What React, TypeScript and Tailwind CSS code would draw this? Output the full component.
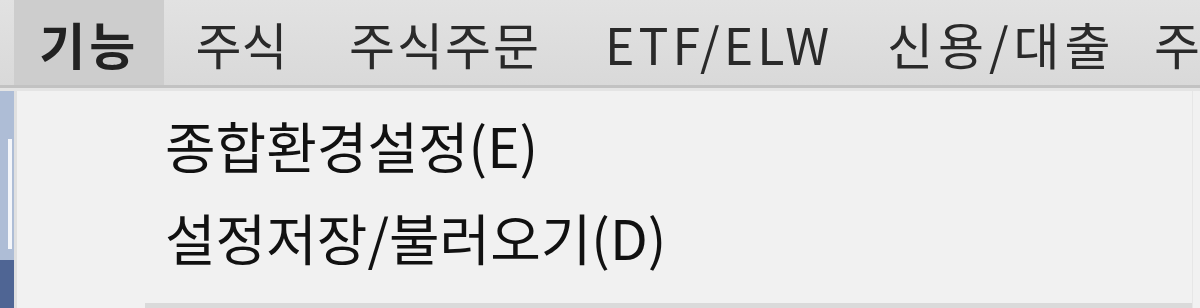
import React from 'react'

const FONT = { fontFamily: '"Noto Sans CJK KR", "Noto Sans", sans-serif' }

const App: React.FC = () => {
  return (
    <div className="w-[1200px] h-[308px] overflow-hidden flex flex-col bg-[#f1f1f1]" style={FONT}>
      {/* menu bar */}
      <div className="h-[85px] flex items-center bg-gradient-to-b from-[#e2e2e2] to-[#d9d9d9] text-[#2a2a2a] text-[50px] leading-none whitespace-nowrap">
        <div className="ml-[14px] w-[151px] h-full flex items-center justify-center bg-[#cdcdcd] font-bold tracking-[4px] text-[#222]">
          기능
        </div>
        <div className="ml-[31px] w-[154px]">주식</div>
        <div className="w-[257px] tracking-[2px]">주식주문</div>
        <div className="w-[283px] tracking-[4px]">ETF/ELW</div>
        <div className="w-[268px] tracking-[5px]">신용/대출</div>
        <div>주</div>
      </div>
      <div className="h-[3px] bg-[#c2c2c2]" />
      <div className="h-[3px] bg-[#e4e4e4]" />

      <div className="flex-1 flex">
        {/* window behind */}
        <div className="w-[14px] flex flex-col bg-[#aebdd6]">
          <div className="h-[48px]" />
          <div className="ml-[8px] w-[4px] h-[110px] bg-[#f4f6fa]" />
          <div className="flex-1" />
          <div className="h-[48px] bg-[#4f6594]" />
        </div>

        {/* dropdown */}
        <div className="flex-1 flex border-l-[3px] border-[#e0e0e0] bg-[#f1f1f1]">
          <div className="w-[128px]" />
          <div className="flex-1 flex flex-col">
            <div className="flex-1 flex flex-col pt-[8px] text-[#111] text-[55px] leading-none">
              <div className="h-[90px] flex items-center pl-[20px]">종합환경설정(E)</div>
              <div className="h-[94px] flex items-center pl-[20px]">설정저장/불러오기(D)</div>
            </div>
            <div className="h-[5px] bg-[#dadada]" />
          </div>
        </div>
        <div className="w-[8px] bg-[#f1f1f1] border-l border-[#e6e6e6]" />
      </div>
    </div>
  )
}

export default App
